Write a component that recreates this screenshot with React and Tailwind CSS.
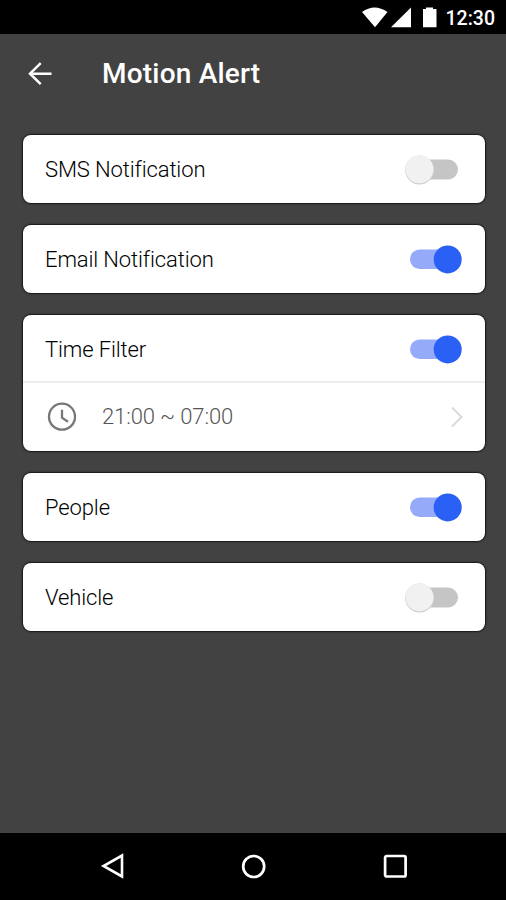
function Toggle({ on }) {
  return (
    <svg width="62" height="40" viewBox="0 0 62 40" className="shrink-0">
      {on ? (
        <>
          <rect x="10" y="10.5" width="48" height="19.5" rx="9.75" fill="#95abfa" />
          <circle cx="47.7" cy="20.4" r="14" fill="#2b60f5" />
        </>
      ) : (
        <>
          <rect x="10" y="10.5" width="48" height="20" rx="10" fill="#c5c5c5" />
          <circle cx="19.5" cy="21" r="14.4" fill="#cfcfcf" />
          <circle cx="19.5" cy="20.3" r="14" fill="#f1f1f1" />
        </>
      )}
    </svg>
  );
}

function Row({ label, on, size = "h-[68px]" }) {
  return (
    <div className={`flex ${size} items-center justify-between pl-[22px] pr-[23px]`}>
      <span className="whitespace-nowrap pt-[2px] text-[22px] font-light leading-[26px] tracking-[-0.12px] text-black">{label}</span>
      <Toggle on={on} />
    </div>
  );
}

function Card({ children }) {
  return (
    <section className="rounded-[8px] bg-white shadow-[0_0_1.5px_1px_#161616]">{children}</section>
  );
}

export default function App() {
  return (
    <div className="flex h-[900px] w-[506px] flex-col overflow-hidden bg-[#424242] font-['Roboto',sans-serif]">
      <div className="flex h-[34px] shrink-0 items-center justify-end bg-black pr-[11px] text-white">
        <svg width="76" height="34" viewBox="0 0 76 34" fill="#fff">
          <path d="M1 12Q13.500 3 26.500 12L14 27.300Z" />
          <path d="M50 7.500V27.300H30Z" />
          <path d="M62 9h3V7.500h7V9h3.500v18.300H62Z" />
        </svg>
        <span className="ml-[9px] pt-[3px] text-[19.500px] font-medium leading-[34px]">12:30</span>
      </div>

      <header className="flex h-[79px] shrink-0 items-center pl-[28px] text-white">
        <svg width="24" height="24" viewBox="0 0 24 24" fill="none" stroke="#fff" strokeWidth="2.500">
          <path d="M23.500 11.700H2M12.700 1.200L2 11.700l10.700 10.500" />
        </svg>
        <h1 className="ml-[50px] text-[28px] font-medium leading-[32px] tracking-[0.2px]">Motion Alert</h1>
      </header>

      <main className="mt-[22px] flex grow flex-col gap-[22px] pl-[23px] pr-[21px]">
        <Card><Row label="SMS Notification" /></Card>
        <Card><Row label="Email Notification" on /></Card>
        <Card>
          <Row label="Time Filter" on size="h-[68px] -mb-[2px]" />
          <div className="flex h-[70px] items-center border-t-2 border-[#ededed] pl-[24px] pr-[22px]">
            <svg width="30" height="30" viewBox="0 0 30 30" fill="none" stroke="#777" strokeWidth="2.300">
              <circle cx="15" cy="14.7" r="13" />
              <path d="M15 7.700v8l6 4" />
            </svg>
            <span className="ml-[25px] grow text-[22px] font-light leading-[26px] tracking-[-0.12px] text-[#555]">21:00 ~ 07:00</span>
            <svg width="12" height="22" viewBox="0 0 12 22" fill="none" stroke="#dadada" strokeWidth="2">
              <path d="M1 1.500L10.500 11 1 20.500" />
            </svg>
          </div>
        </Card>
        <Card><Row label="People" on /></Card>
        <Card><Row label="Vehicle" /></Card>
      </main>

      <nav className="flex h-[67px] shrink-0 items-center justify-between bg-black pb-px pl-[100px] pr-[99px]">
        <svg width="24" height="28" viewBox="0 0 24 28" fill="none" stroke="#fff" strokeWidth="2.600">
          <path d="M22 3.500V24.500L3.500 14Z" />
        </svg>
        <svg width="26" height="26" viewBox="0 0 26 26" fill="none" stroke="#fff" strokeWidth="2.700">
          <circle cx="12.700" cy="13.500" r="10.500" />
        </svg>
        <svg width="24" height="24" viewBox="0 0 24 24" fill="none" stroke="#fff" strokeWidth="2.700">
          <rect x="2.100" y="2" width="20.500" height="20.500" rx="1.500" />
        </svg>
      </nav>
    </div>
  );
}
